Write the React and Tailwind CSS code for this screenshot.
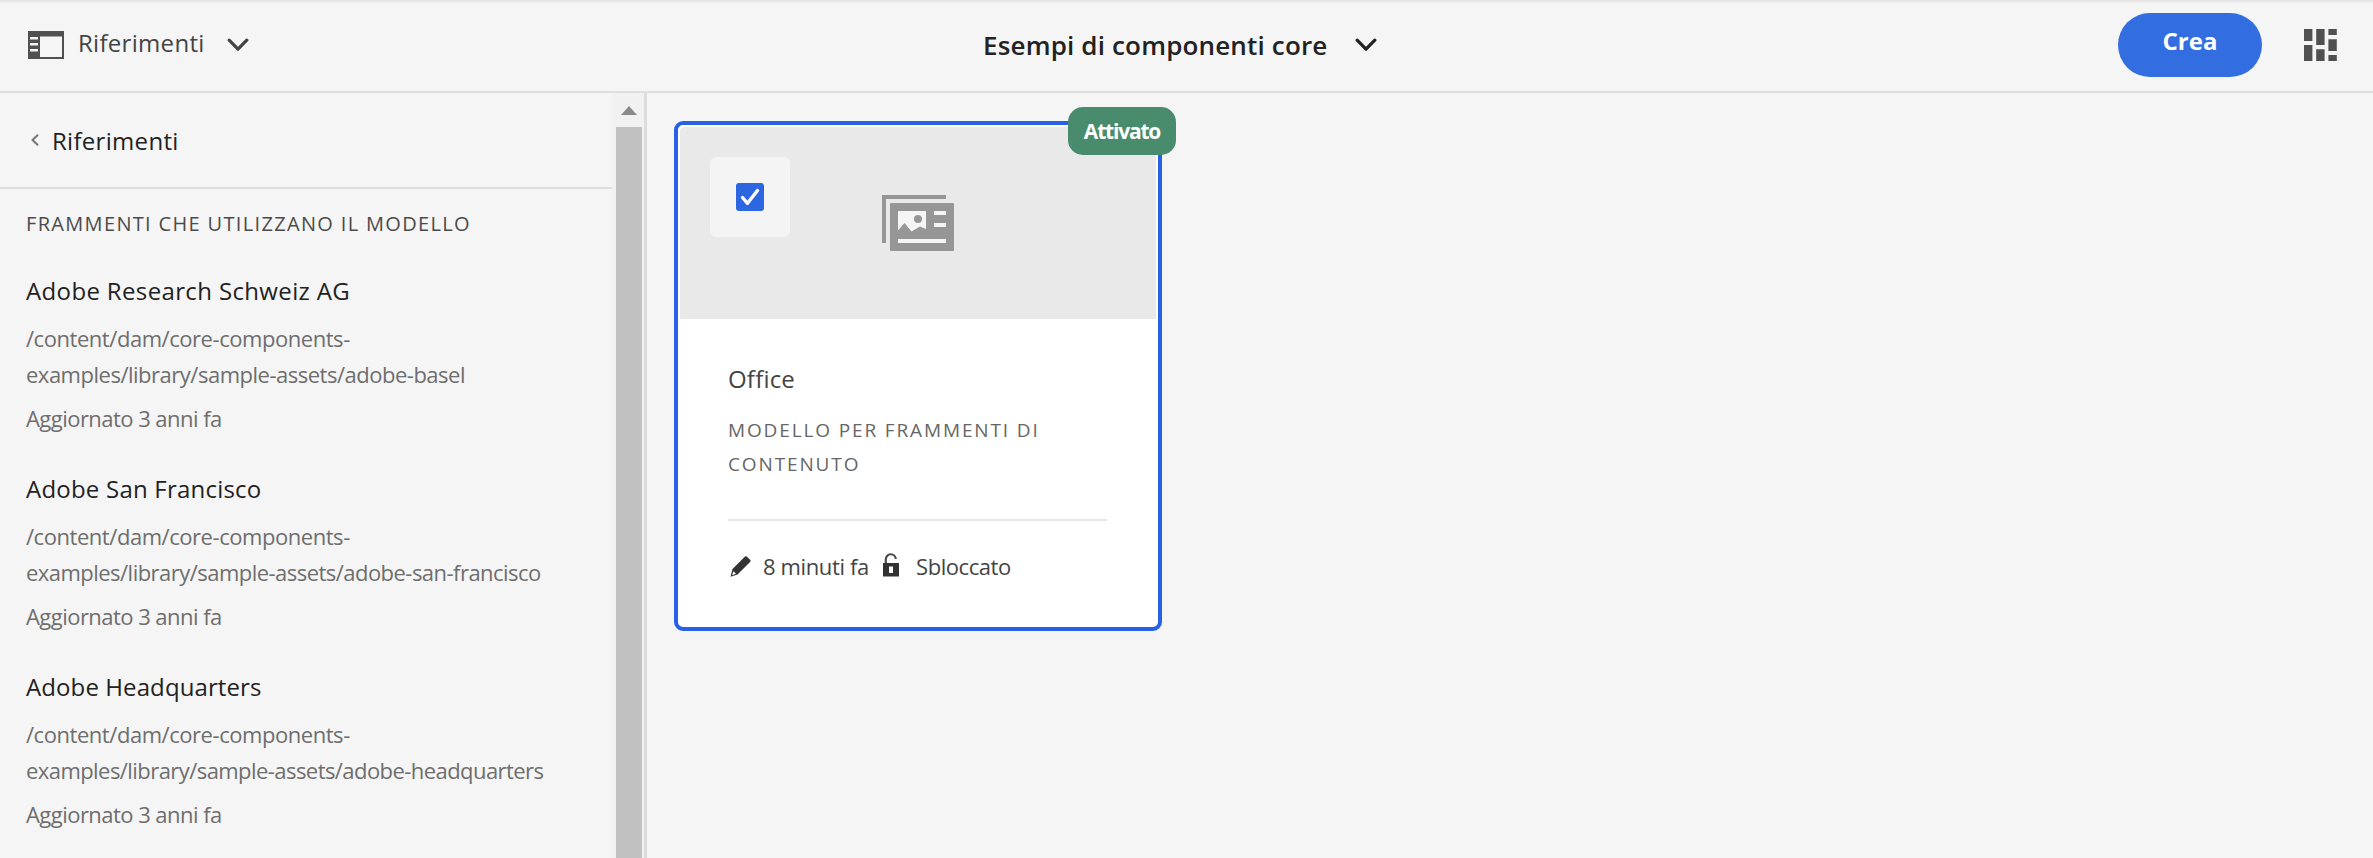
const items = [
  { title: 'Adobe Research Schweiz AG', path: 'adobe-basel', titleClass: 'tracking-[0.36px]', pathClass: 'tracking-[-0.49px]' },
  { title: 'Adobe San Francisco', path: 'adobe-san-francisco', titleClass: 'tracking-[0.22px]', pathClass: 'tracking-[-0.53px]' },
  { title: 'Adobe Headquarters', path: 'adobe-headquarters', titleClass: 'tracking-[0.1px]', pathClass: 'tracking-[-0.56px]' },
];

function Chevron({ className }) {
  return (
    <svg className={className} width="22" height="14" viewBox="0 0 22 14" fill="none" stroke="currentColor" strokeWidth="3.2" strokeLinecap="round" strokeLinejoin="round">
      <path d="M2.2 2.2 11 11.2l8.8-9" />
    </svg>
  );
}

function RailIcon() {
  return (
    <svg className="mt-[31px] shrink-0" width="36" height="28" viewBox="0 0 36 28">
      <path fill="#505050" fillRule="evenodd" d="M0 0h36v28H0zM12 5.500v20.500h22V5.500zM2 6h8v2.500H2zM2 12h8v2.500H2zM2 18h8v2.500H2z" />
    </svg>
  );
}

function GridIcon() {
  return (
    <svg className="mt-[29px] shrink-0" width="33" height="32" viewBox="0 0 33 32" fill="#505050">
      <path d="M0 0h8.400v12H0zM0 16h8.400v16H0zM12.200 0h8.400v16h-8.400zM12.200 20.200h8.400V32h-8.400zM24.400 0h8.400v6h-8.400zM24.400 10.200h8.400V22h-8.400zM24.400 26h8.400v6h-8.400z" />
    </svg>
  );
}

function ModelIcon() {
  return (
    <svg className="mt-[68px] shrink-0" width="72" height="57" viewBox="0 0 72 57">
      <path fill="#969696" d="M0 0h64v4H4v44H0z" />
      <rect x="8" y="8" width="64" height="48" rx="1" fill="#969696" />
      <path fill="#f5f5f5" d="M16 16h28v18l-6-2.500-8.500 5L22.500 28 16 35.500zM52 16h12v4H52zM52 28h12v4H52zM16 44h48v4H16z" />
      <circle cx="36" cy="24" r="4" fill="#969696" />
    </svg>
  );
}

function Item({ item }) {
  return (
    <li className="mb-[41px] h-[157px]">
      <div className={`h-[30px] text-[24px] leading-[30px] text-[#222222] ${item.titleClass}`}>{item.title}</div>
      <div className="mt-[14px] text-[22px] leading-[36.3px] text-[#6e6e6e]">
        <div className="tracking-[-0.45px]">/content/dam/core-components-</div>
        <div className={item.pathClass}>examples/library/sample-assets/{item.path}</div>
      </div>
      <div className="mt-[10px] text-[22px] leading-[30px] tracking-[-0.54px] text-[#6e6e6e]">Aggiornato 3 anni fa</div>
    </li>
  );
}

export default function App() {
  return (
    <div className="flex h-[858px] w-[2373px] flex-col overflow-hidden bg-[#f5f5f5] font-['Open_Sans',sans-serif] whitespace-nowrap">
      <header className="flex h-[93px] shrink-0 items-start border-b-2 border-[#dedede] bg-linear-to-b from-[#e4e4e4] to-[#f5f5f5] to-[4px]">
        <div className="flex w-[983px] items-start pl-[28px] text-[#444444]">
          <RailIcon />
          <span className="mt-[28px] ml-[14px] text-[24px] leading-[30px] tracking-[0.3px]">Riferimenti</span>
          <Chevron className="mt-[38px] ml-[22px]" />
        </div>
        <div className="flex flex-1 items-start text-[#222222]">
          <span className="mt-[30px] w-[344px] text-[26px] leading-[30px] font-semibold tracking-[0.17px]">Esempi di componenti core</span>
          <Chevron className="mt-[38px] ml-[28px]" />
        </div>
        <button className="mt-[13px] mr-[42px] h-[64px] w-[144px] rounded-full bg-[#326ee0] pb-[9px] text-[24px] leading-[30px] font-bold text-white">Crea</button>
        <div className="w-[69px]">
          <GridIcon />
        </div>
      </header>

      <div className="flex min-h-0 flex-1">
        <aside className="w-[612px] shrink-0 overflow-hidden">
          <div className="flex h-[96px] items-start border-b-2 border-[#dedede] pl-[31px]">
            <svg className="mt-[41px]" width="8" height="12" viewBox="0 0 8 12" fill="none" stroke="#777777" strokeWidth="2" strokeLinecap="round" strokeLinejoin="round">
              <path d="M6.500 1.200 1.500 6l5 4.800" />
            </svg>
            <span className="mt-[33px] ml-[13px] text-[24px] leading-[30px] tracking-[0.3px] text-[#222222]">Riferimenti</span>
          </div>
          <h2 className="mt-[20px] ml-[26px] text-[20px] leading-[30px] tracking-[1.33px] text-[#4b4b4b]">FRAMMENTI CHE UTILIZZANO IL MODELLO</h2>
          <ul className="mt-[37px] ml-[26px]">
            {items.map((item) => (
              <Item key={item.title} item={item} />
            ))}
          </ul>
        </aside>

        <div className="flex w-[32px] shrink-0 flex-col items-center bg-[#f1f1f1]">
          <svg className="mt-[13px] ml-[2px] shrink-0" width="16" height="9" viewBox="0 0 16 9">
            <path fill="#8a8a8a" d="M8 0l8 9H0z" />
          </svg>
          <div className="mt-[12px] ml-[2px] w-[26px] flex-1 bg-[#c1c1c1]" />
        </div>

        <main className="flex-1 border-l-3 border-[#dcdcdc] pt-[28px] pl-[27px]">
          <article className="relative h-[510px] w-[488px] rounded-[9px] border-4 border-[#2860e6] bg-white">
            <div className="mx-[2px] mt-[2px] flex h-[192px] items-start rounded-t-[4px] bg-[#e9e9e9]">
              <div className="mt-[30px] mr-[92px] ml-[30px] flex h-[80px] w-[80px] items-center justify-center rounded-[6px] bg-[#f4f4f4]">
                <svg width="28" height="28" viewBox="0 0 28 28" fill="none">
                  <rect width="28" height="28" rx="3" fill="#2c66e0" />
                  <path d="M6.500 14.500 11.500 20.300 21.500 7.500" stroke="#ffffff" strokeWidth="3.400" strokeLinecap="round" strokeLinejoin="round" />
                </svg>
              </div>
              <ModelIcon />
            </div>
            <div className="pt-[45px] pr-[51px] pl-[50px]">
              <div className="text-[24px] leading-[30px] tracking-[0.2px] text-[#444444]">Office</div>
              <div className="mt-[20px] text-[19px] leading-[33.7px] text-[#666666]">
                <div className="tracking-[1.87px]">MODELLO PER FRAMMENTI DI</div>
                <div className="tracking-[1.87px]">CONTENUTO</div>
              </div>
              <div className="mt-[38px] h-[2px] bg-[#e6e6e6]" />
              <div className="mt-[30px] flex h-[30px] items-start text-[22px] leading-[30px] text-[#444444]">
                <svg className="mt-[5px] ml-[2px]" width="21" height="21" viewBox="0 0 21 21">
                  <path fill="#323232" fillRule="evenodd" d="M15 0.600Q16 0 17 0.700L20.300 4Q21 5 20.300 5.800L7.500 18.500 0.500 20.800 2.500 13zM3.600 15.200 2 19.200 6 17.800z" />
                </svg>
                <span className="ml-[12px] w-[107px] tracking-[-0.37px]">8 minuti fa</span>
                <svg className="mt-[2px] ml-[13px]" width="16" height="24" viewBox="0 0 16 24">
                  <path fill="none" stroke="#4b4b4b" strokeWidth="2.200" d="M2.800 11V6.500a5 5 0 0 1 10-.5" />
                  <path fill="#323232" fillRule="evenodd" d="M0 10h16v13.500H0zM6 13.500h4v6.500H6z" />
                </svg>
                <span className="ml-[17px] tracking-[-0.43px]">Sbloccato</span>
              </div>
            </div>
            <div className="absolute top-[-18px] right-[-18px] flex h-[48px] w-[108px] items-center justify-center rounded-[15px] bg-[#488c6d] text-[21px] leading-[30px] font-bold tracking-[-1.2px] text-white">Attivato</div>
          </article>
        </main>
      </div>
    </div>
  );
}
